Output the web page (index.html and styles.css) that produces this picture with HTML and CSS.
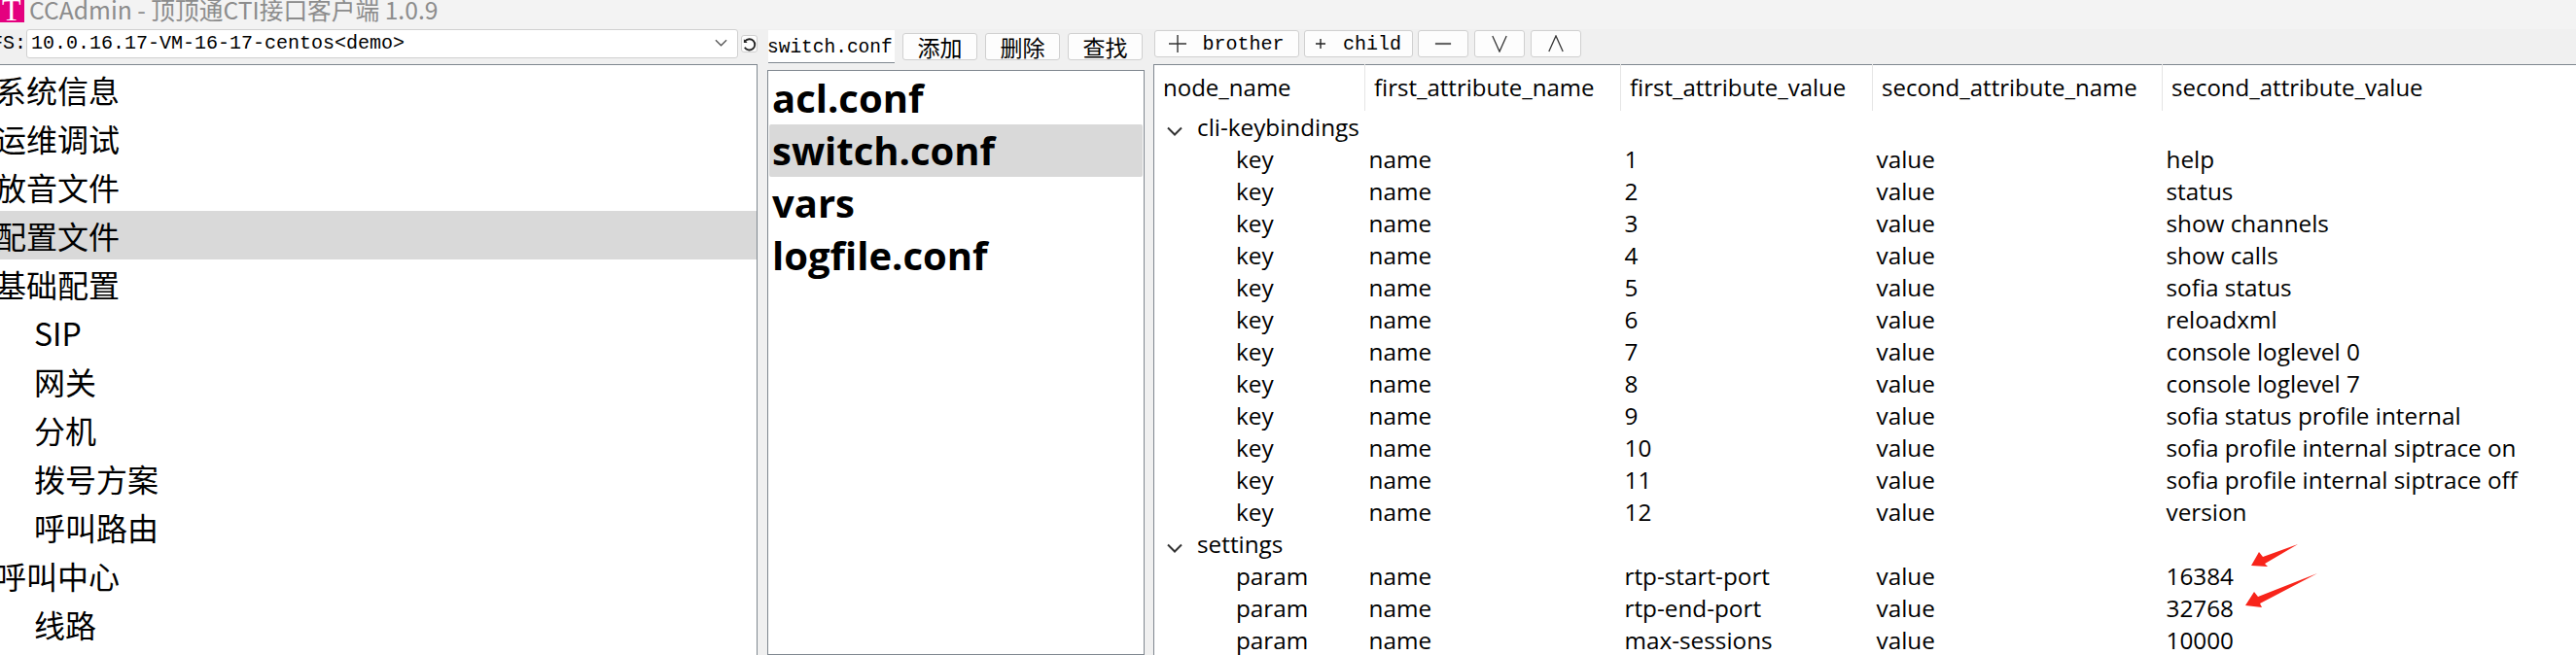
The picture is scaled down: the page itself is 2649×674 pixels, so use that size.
FILE: index.html
```html
<!DOCTYPE html>
<html lang="zh-CN">
<head>
<meta charset="utf-8">
<title>CCAdmin</title>
<link rel="stylesheet" href="styles.css">
</head>
<body>
<header class="titlebar">
  <div class="logo"><span>T</span></div>
  <div class="apptitle">CCAdmin - 顶顶通CTI接口客户端 1.0.9</div>
</header>
<main class="panes">
  <section class="pane pane-nav">
    <div class="bar bar-nav">
      <span class="fs-label">FS:</span>
      <div class="combo">
        <span class="combo-text">10.0.16.17-VM-16-17-centos&lt;demo&gt;</span>
        <svg class="combo-caret" viewBox="0 0 14 8"><path d="M1 1l6 6 6-6"/></svg>
      </div>
      <button class="btn btn-refresh"><svg viewBox="0 0 16 16"><path d="M3 11.5A6 6 0 1 0 3.5 4.5"/><path class="fill" d="M2 2.5v4h4z"/></svg></button>
    </div>
    <ul class="tree">
      <li>系统信息</li>
      <li>运维调试</li>
      <li>放音文件</li>
      <li class="sel">配置文件</li>
      <li>基础配置</li>
      <li class="child">SIP</li>
      <li class="child">网关</li>
      <li class="child">分机</li>
      <li class="child">拨号方案</li>
      <li class="child">呼叫路由</li>
      <li>呼叫中心</li>
      <li class="child">线路</li>
    </ul>
  </section>
  <section class="pane pane-files">
    <div class="bar bar-files">
      <div class="search">switch.conf</div>
      <button class="btn btn-file">添加</button>
      <button class="btn btn-file">删除</button>
      <button class="btn btn-file">查找</button>
    </div>
    <ul class="files">
      <li>acl.conf</li>
      <li class="sel">switch.conf</li>
      <li>vars</li>
      <li>logfile.conf</li>
    </ul>
  </section>
  <section class="pane pane-table">
    <div class="bar bar-table">
      <button class="btn btn-tool b-brother"><svg class="plus-big" viewBox="0 0 18 18"><path d="M0 9h18M9 0v18"/></svg>brother</button>
      <button class="btn btn-tool b-child"><svg class="plus-small" viewBox="0 0 10 10"><path d="M0 5h10M5 0v10"/></svg>child</button>
      <button class="btn btn-tool b-icon"><svg viewBox="0 0 20 20"><path class="minus" d="M1 10h18"/></svg></button>
      <button class="btn btn-tool b-icon"><svg viewBox="0 0 20 20"><path d="M2 1l8 18 8-18"/></svg></button>
      <button class="btn btn-tool b-icon"><svg viewBox="0 0 20 20"><path d="M2 19l8-18 8 18"/></svg></button>
    </div>
    <table class="grid">
      <colgroup><col class="c1"><col class="c2"><col class="c3"><col class="c4"><col></colgroup>
      <thead>
        <tr><th>node_name</th><th>first_attribute_name</th><th>first_attribute_value</th><th>second_attribute_name</th><th>second_attribute_value</th></tr>
      </thead>
      <tbody>
        <tr class="group"><td colspan="5"><svg class="caret" viewBox="0 0 16 10"><path d="M1 1.5l7 7 7-7"/></svg>cli-keybindings</td></tr>
        <tr><td>key</td><td>name</td><td>1</td><td>value</td><td>help</td></tr>
        <tr><td>key</td><td>name</td><td>2</td><td>value</td><td>status</td></tr>
        <tr><td>key</td><td>name</td><td>3</td><td>value</td><td>show channels</td></tr>
        <tr><td>key</td><td>name</td><td>4</td><td>value</td><td>show calls</td></tr>
        <tr><td>key</td><td>name</td><td>5</td><td>value</td><td>sofia status</td></tr>
        <tr><td>key</td><td>name</td><td>6</td><td>value</td><td>reloadxml</td></tr>
        <tr><td>key</td><td>name</td><td>7</td><td>value</td><td>console loglevel 0</td></tr>
        <tr><td>key</td><td>name</td><td>8</td><td>value</td><td>console loglevel 7</td></tr>
        <tr><td>key</td><td>name</td><td>9</td><td>value</td><td>sofia status profile internal</td></tr>
        <tr><td>key</td><td>name</td><td>10</td><td>value</td><td>sofia profile internal siptrace on</td></tr>
        <tr><td>key</td><td>name</td><td>11</td><td>value</td><td>sofia profile internal siptrace off</td></tr>
        <tr><td>key</td><td>name</td><td>12</td><td>value</td><td>version</td></tr>
        <tr class="group"><td colspan="5"><svg class="caret" viewBox="0 0 16 10"><path d="M1 1.5l7 7 7-7"/></svg>settings</td></tr>
        <tr><td>param</td><td>name</td><td>rtp-start-port</td><td>value</td><td>16384</td></tr>
        <tr><td>param</td><td>name</td><td>rtp-end-port</td><td>value</td><td>32768</td></tr>
        <tr><td>param</td><td>name</td><td>max-sessions</td><td>value</td><td>10000</td></tr>
      </tbody>
    </table>
  </section>
</main>
<svg class="arrows" viewBox="0 0 2649 674">
  <polygon points="2315,582 2323,568 2327,573 2363,560 2329,580 2332,583"/>
  <polygon points="2309,623 2318,609 2322,614 2383,590 2324,621 2326,625"/>
</svg>
</body>
</html>
```

FILE: styles.css
```css
* { box-sizing: border-box; }
html, body { margin: 0; padding: 0; height: 674px; overflow: hidden; }
body {
  background: #f0f0f0;
  color: #000;
  font-family: "Open Sans", "Noto Sans CJK SC", sans-serif;
  width: 2649px;
  position: relative;
}
ul { list-style: none; margin: 0; padding: 0; }

.titlebar { height: 30px; background: #f3f3f3; display: flex; overflow: hidden; }
.logo {
  width: 25px; height: 23px; background: #e4007f; color: #fff; padding-left: 2px; flex: none;
  font: 32px/21px "Liberation Serif", serif; overflow: hidden;
}
.apptitle {
  margin: -9px 0 0 5px; color: #8c8c8c; height: 36px;
  font: 24.7px/36px "Noto Sans CJK SC", sans-serif; white-space: nowrap;
}

.panes { display: flex; height: 644px; }
.pane { display: flex; flex-direction: column; }
.pane-nav { width: 779px; }
.pane-files { width: 388px; margin-left: 10px; }
.pane-table { flex: 1; margin-left: 9px; min-width: 0; }
.bar { display: flex; flex: none; font-family: "Liberation Mono", "Noto Sans CJK SC", monospace; font-size: 20px; }

.btn {
  font: inherit; padding: 0; color: #000; background: #fdfdfd;
  border: 1px solid #d0d0d0; border-radius: 3px;
  display: flex; align-items: center; justify-content: center;
}

.bar-nav { height: 36px; align-items: flex-start; }
.fs-label { margin-left: -9px; flex: none; width: 36px; line-height: 30px; text-align: left; }
.combo {
  flex: none; width: 732px; height: 30px; background: #fff; border: 1px solid #d0d0d0; border-radius: 3px;
  display: flex; align-items: center; justify-content: space-between; padding: 0 10px 0 4px; line-height: 28px; white-space: nowrap;
}
.combo-caret { width: 13px; height: 8px; fill: none; stroke: #555; stroke-width: 1.4; margin-top: -2px; }
.btn-refresh { width: 17px; height: 18px; margin: 6px 0 0 3px; flex: none; }
.btn-refresh svg { width: 15px; height: 15px; fill: none; stroke: #222; stroke-width: 2; }
.btn-refresh .fill { fill: #222; stroke: none; }

.tree {
  flex: 1; background: #fff; border-top: 1px solid #808890; border-right: 1px solid #808890;
  font: 32px/50px "Noto Sans CJK SC", sans-serif; margin-left: -5px; overflow: hidden;
}
.tree li { height: 50px; white-space: nowrap; }
.tree .child { padding-left: 40px; }
.sel { background: #d9d9d9; }

.bar-files { height: 42px; padding-top: 1px; align-items: flex-start; }
.search {
  width: 130px; height: 34px; background: #fff; border-bottom: 1px solid #808890;
  line-height: 36px; overflow: hidden; white-space: nowrap; text-indent: -1px; flex: none; margin-left: 1px; font-size: 19.5px;
}
.btn-file { width: 77px; height: 28px; flex: none; margin: 3px 8px 0 0; font-size: 23px; }
.search + .btn-file { margin-left: 8px; }
.files {
  flex: 1; background: #fff; border: 1px solid #808890; padding: 1px 1px 0;
  font-weight: 700; font-size: 40px;
}
.files li { height: 54px; line-height: 54px; padding-left: 3px; border-radius: 2px; }

.bar-table { height: 36px; padding: 1px 0 0 1px; gap: 5px; align-items: flex-start; }
.btn-tool { height: 28px; flex: none; font-size: 20px; }
.b-brother { width: 149px; }
.b-child { width: 112px; }
.b-icon { width: 52px; }
.b-icon + .b-icon { margin-left: 1px; }
.b-icon svg { width: 18px; height: 18px; fill: none; stroke: #333; stroke-width: 1.4; }
.b-icon .minus { stroke: #666; stroke-width: 2.4; }
.plus-big { width: 18px; height: 18px; margin-right: 16px; fill: none; stroke: #333; stroke-width: 1.4; }
.plus-small { width: 10px; height: 10px; margin-right: 18px; fill: none; stroke: #222; stroke-width: 1.4; }

.grid {
  flex: 1; width: 100%; background: #fff; border-collapse: collapse; table-layout: fixed;
  border-top: 1px solid #808890; border-left: 1px solid #808890;
  font-size: 24px; display: table;
}
.c1 { width: 217px; }
.c2 { width: 263px; }
.c3 { width: 259px; }
.c4 { width: 298px; }
.grid th {
  height: 47px; padding: 0 0 1px 9px; font-weight: 400; text-align: left; vertical-align: middle;
  border-right: 1px solid #e5e5e5; white-space: nowrap; line-height: 24px;
}
.grid th + th { padding-left: 9px; }
.grid th:last-child { border-right: 0; }
.grid td { height: 33px; padding: 0 0 0 4px; white-space: nowrap; line-height: 33px; font-size: 24.3px; }
.grid td:first-child { padding-left: 84px; }
.grid .group td:first-child { padding-left: 13px; }
.caret { width: 16px; height: 10px; fill: none; stroke: #333; stroke-width: 2; margin-right: 15px; }

.arrows { position: absolute; left: 0; top: 0; width: 2649px; height: 674px; pointer-events: none; }
.arrows polygon { fill: #f8241a; }
```
